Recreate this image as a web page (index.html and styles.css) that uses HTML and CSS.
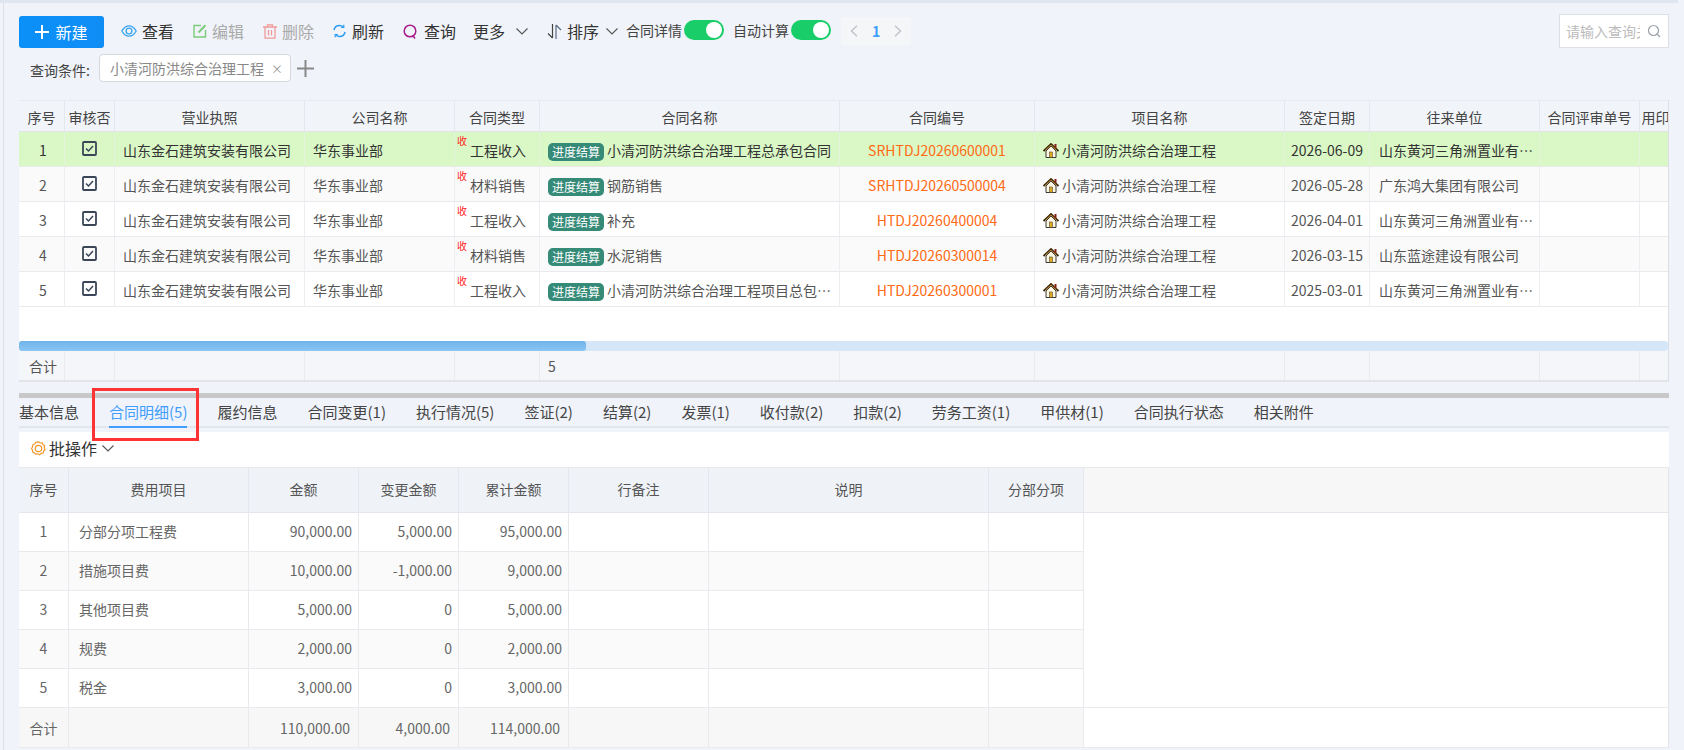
FILE: index.html
```html
<!DOCTYPE html>
<html lang="zh-CN">

<head>
    <meta charset="UTF-8">
    <title>合同管理</title>
    <link rel="stylesheet" href="styles.css">
</head>

<body>
    <div class="top-band"></div>
    <div class="page">

        <div class="toolbar">
            <button class="new-btn">
                <svg width="14" height="14" viewBox="0 0 14 14"><path d="M7 0v14M0 7h14" stroke="#fff" stroke-width="2" fill="none"/></svg>
                新建
            </button>
            <span class="tool first">
                <svg width="16" height="14" viewBox="0 0 16 14" fill="none" stroke="#38a4f4" stroke-width="1.3"><path d="M.8 7C3 3.2 5.3 1.8 8 1.8S13 3.2 15.2 7C13 10.8 10.7 12.2 8 12.2S3 10.8.8 7z"/><circle cx="8" cy="7" r="2.9"/></svg>
                查看
            </span>
            <span class="tool muted">
                <svg width="14" height="14" viewBox="0 0 14 14" fill="none" stroke="#7ccb7c" stroke-width="1.4"><path d="M8 1.5H1V13h11.500V6"/><path d="M5.500 8.500L12.500 1.200" stroke-width="2"/></svg>
                编辑
            </span>
            <span class="tool muted">
                <svg width="14" height="15" viewBox="0 0 14 15" fill="none" stroke="#f09a9a" stroke-width="1.3"><path d="M0 3h14M4.500 3V.8h5V3M2 3v11.200h10V3M5.500 6v5.500M8.500 6v5.500"/></svg>
                删除
            </span>
            <span class="tool refresh">
                <svg width="13" height="14" viewBox="0 0 13 14" fill="none" stroke="#2a9df4" stroke-width="1.5"><path d="M1 6C1.500 3.200 3.700 1.500 6.500 1.500c1.500 0 2.700.5 3.700 1.500"/><path d="M12 8c-.5 2.800-2.700 4.500-5.500 4.500-1.500 0-2.700-.5-3.700-1.500"/><path d="M10.800.8v2.700H8.200M2.200 13.200v-2.700h2.600" stroke-width="1.2"/></svg>
                刷新
            </span>
            <span class="tool query">
                <svg width="14" height="15" viewBox="0 0 14 15" fill="none" stroke="#a81d8c" stroke-width="1.5"><circle cx="7" cy="7" r="5.8"/><path d="M9.800 11.500l2.200 3"/></svg>
                查询
            </span>
            <span class="tool more">
                更多
                <svg class="chev-gap" width="12" height="7" viewBox="0 0 12 7" fill="none" stroke="#555" stroke-width="1.1"><path d="M.5.5L6 6l5.500-5.500"/></svg>
            </span>
            <span class="tool">
                <svg width="15" height="15" viewBox="0 0 15 15" fill="none" stroke-width="1.2"><path d="M5.500 0v14M5.500 14L1 9.500" stroke="#444"/><path d="M9 15V1M9 1l5 5" stroke="#5a6b80"/></svg>
                排序
                <svg class="chev-tight" width="12" height="7" viewBox="0 0 12 7" fill="none" stroke="#555" stroke-width="1.1"><path d="M.5.5L6 6l5.500-5.500"/></svg>
            </span>
            <span class="switch-label first-switch">合同详情</span><span class="switch"></span>
            <span class="switch-label second-switch">自动计算</span><span class="switch"></span>
            <div class="pager">
                <svg width="8" height="12" viewBox="0 0 8 12" fill="none" stroke="#c0c4cc" stroke-width="1.5"><path d="M7 .8L1.500 6 7 11.200"/></svg>
                <span class="pager-num">1</span>
                <svg width="8" height="12" viewBox="0 0 8 12" fill="none" stroke="#c0c4cc" stroke-width="1.5"><path d="M1 .8L6.500 6 1 11.200"/></svg>
            </div>
            <div class="search">
                <input type="text" placeholder="请输入查询关键字">
                <svg width="14" height="14" viewBox="0 0 14 14" fill="none" stroke="#9aa0a8" stroke-width="1.2"><circle cx="6.500" cy="6.500" r="5"/><path d="M10 10l3 3"/></svg>
            </div>
        </div>

        <div class="filter-row">
            <span class="filter-label">查询条件:</span>
            <span class="filter-tag">小清河防洪综合治理工程<span class="tag-close">×</span></span>
            <svg class="filter-add" width="17" height="17" viewBox="0 0 17 17"><path d="M8.500 0v17M0 8.500h17" stroke="#888" stroke-width="2" fill="none"/></svg>
        </div>

        <div class="grid">
            <table class="main-table">
                <colgroup>
                    <col class="c1"><col class="c2"><col class="c3"><col class="c4"><col class="c5"><col class="c6">
                    <col class="c7"><col class="c8"><col class="c9"><col class="c10"><col class="c11"><col class="c12">
                </colgroup>
                <thead>
                    <tr>
                        <th>序号</th><th>审核否</th><th>营业执照</th><th>公司名称</th><th>合同类型</th><th>合同名称</th>
                        <th>合同编号</th><th>项目名称</th><th>签定日期</th><th>往来单位</th><th>合同评审单号</th><th>用印状态</th>
                    </tr>
                </thead>
                <tbody>
                    <tr class="selected">
                        <td class="center">1</td>
                        <td class="center"><svg class="check" width="15" height="15" viewBox="0 0 15 15" fill="none" stroke="#3a4658"><rect x="1" y="1" width="13" height="13" rx="1" stroke-width="1.8"/><path d="M4 7.500l2.500 2.500L11 5" stroke-width="1.5"/></svg></td>
                        <td>山东金石建筑安装有限公司</td>
                        <td>华东事业部</td>
                        <td class="type"><span class="recv">收</span>工程收入</td>
                        <td><span class="badge">进度结算</span>小清河防洪综合治理工程总承包合同</td>
                        <td class="center code">SRHTDJ20260600001</td>
                        <td class="project"><svg class="house" width="16" height="15" viewBox="0 0 16 15"><path d="M3 8v6.500h10V8L8 3z" fill="#fdf6e0" stroke="#222" stroke-width=".9"/><path d="M.5 8L8 1l7.500 7" fill="none" stroke="#3a2708" stroke-width="1.8"/><path d="M2.500 7L8 2l5.500 5" fill="none" stroke="#d0952a" stroke-width=".8"/><rect x="11.500" y="1" width="2" height="4" fill="#8a2318"/><rect x="6.500" y="9" width="3" height="5.500" fill="#e0a81e" stroke="#333" stroke-width=".5"/></svg>小清河防洪综合治理工程</td>
                        <td class="center">2026-06-09</td>
                        <td class="partner">山东黄河三角洲置业有限公司</td>
                        <td></td><td></td>
                    </tr>
                    <tr>
                        <td class="center">2</td>
                        <td class="center"><svg class="check" width="15" height="15" viewBox="0 0 15 15" fill="none" stroke="#3a4658"><rect x="1" y="1" width="13" height="13" rx="1" stroke-width="1.8"/><path d="M4 7.500l2.500 2.500L11 5" stroke-width="1.5"/></svg></td>
                        <td>山东金石建筑安装有限公司</td>
                        <td>华东事业部</td>
                        <td class="type"><span class="recv">收</span>材料销售</td>
                        <td><span class="badge">进度结算</span>钢筋销售</td>
                        <td class="center code">SRHTDJ20260500004</td>
                        <td class="project"><svg class="house" width="16" height="15" viewBox="0 0 16 15"><path d="M3 8v6.500h10V8L8 3z" fill="#fdf6e0" stroke="#222" stroke-width=".9"/><path d="M.5 8L8 1l7.500 7" fill="none" stroke="#3a2708" stroke-width="1.8"/><path d="M2.500 7L8 2l5.500 5" fill="none" stroke="#d0952a" stroke-width=".8"/><rect x="11.500" y="1" width="2" height="4" fill="#8a2318"/><rect x="6.500" y="9" width="3" height="5.500" fill="#e0a81e" stroke="#333" stroke-width=".5"/></svg>小清河防洪综合治理工程</td>
                        <td class="center">2026-05-28</td>
                        <td class="partner">广东鸿大集团有限公司</td>
                        <td></td><td></td>
                    </tr>
                    <tr>
                        <td class="center">3</td>
                        <td class="center"><svg class="check" width="15" height="15" viewBox="0 0 15 15" fill="none" stroke="#3a4658"><rect x="1" y="1" width="13" height="13" rx="1" stroke-width="1.8"/><path d="M4 7.500l2.500 2.500L11 5" stroke-width="1.5"/></svg></td>
                        <td>山东金石建筑安装有限公司</td>
                        <td>华东事业部</td>
                        <td class="type"><span class="recv">收</span>工程收入</td>
                        <td><span class="badge">进度结算</span>补充</td>
                        <td class="center code">HTDJ20260400004</td>
                        <td class="project"><svg class="house" width="16" height="15" viewBox="0 0 16 15"><path d="M3 8v6.500h10V8L8 3z" fill="#fdf6e0" stroke="#222" stroke-width=".9"/><path d="M.5 8L8 1l7.500 7" fill="none" stroke="#3a2708" stroke-width="1.8"/><path d="M2.500 7L8 2l5.500 5" fill="none" stroke="#d0952a" stroke-width=".8"/><rect x="11.500" y="1" width="2" height="4" fill="#8a2318"/><rect x="6.500" y="9" width="3" height="5.500" fill="#e0a81e" stroke="#333" stroke-width=".5"/></svg>小清河防洪综合治理工程</td>
                        <td class="center">2026-04-01</td>
                        <td class="partner">山东黄河三角洲置业有限公司</td>
                        <td></td><td></td>
                    </tr>
                    <tr>
                        <td class="center">4</td>
                        <td class="center"><svg class="check" width="15" height="15" viewBox="0 0 15 15" fill="none" stroke="#3a4658"><rect x="1" y="1" width="13" height="13" rx="1" stroke-width="1.8"/><path d="M4 7.500l2.500 2.500L11 5" stroke-width="1.5"/></svg></td>
                        <td>山东金石建筑安装有限公司</td>
                        <td>华东事业部</td>
                        <td class="type"><span class="recv">收</span>材料销售</td>
                        <td><span class="badge">进度结算</span>水泥销售</td>
                        <td class="center code">HTDJ20260300014</td>
                        <td class="project"><svg class="house" width="16" height="15" viewBox="0 0 16 15"><path d="M3 8v6.500h10V8L8 3z" fill="#fdf6e0" stroke="#222" stroke-width=".9"/><path d="M.5 8L8 1l7.500 7" fill="none" stroke="#3a2708" stroke-width="1.8"/><path d="M2.500 7L8 2l5.500 5" fill="none" stroke="#d0952a" stroke-width=".8"/><rect x="11.500" y="1" width="2" height="4" fill="#8a2318"/><rect x="6.500" y="9" width="3" height="5.500" fill="#e0a81e" stroke="#333" stroke-width=".5"/></svg>小清河防洪综合治理工程</td>
                        <td class="center">2026-03-15</td>
                        <td class="partner">山东蓝途建设有限公司</td>
                        <td></td><td></td>
                    </tr>
                    <tr>
                        <td class="center">5</td>
                        <td class="center"><svg class="check" width="15" height="15" viewBox="0 0 15 15" fill="none" stroke="#3a4658"><rect x="1" y="1" width="13" height="13" rx="1" stroke-width="1.8"/><path d="M4 7.500l2.500 2.500L11 5" stroke-width="1.5"/></svg></td>
                        <td>山东金石建筑安装有限公司</td>
                        <td>华东事业部</td>
                        <td class="type"><span class="recv">收</span>工程收入</td>
                        <td><span class="badge">进度结算</span>小清河防洪综合治理工程项目总包合同</td>
                        <td class="center code">HTDJ20260300001</td>
                        <td class="project"><svg class="house" width="16" height="15" viewBox="0 0 16 15"><path d="M3 8v6.500h10V8L8 3z" fill="#fdf6e0" stroke="#222" stroke-width=".9"/><path d="M.5 8L8 1l7.500 7" fill="none" stroke="#3a2708" stroke-width="1.8"/><path d="M2.500 7L8 2l5.500 5" fill="none" stroke="#d0952a" stroke-width=".8"/><rect x="11.500" y="1" width="2" height="4" fill="#8a2318"/><rect x="6.500" y="9" width="3" height="5.500" fill="#e0a81e" stroke="#333" stroke-width=".5"/></svg>小清河防洪综合治理工程</td>
                        <td class="center">2025-03-01</td>
                        <td class="partner">山东黄河三角洲置业有限公司</td>
                        <td></td><td></td>
                    </tr>
                </tbody>
            </table>
            <div class="grid-empty"></div>
            <div class="scroll-track"><div class="scroll-thumb"></div></div>
            <table class="main-table foot-table">
                <colgroup>
                    <col class="c1"><col class="c2"><col class="c3"><col class="c4"><col class="c5"><col class="c6">
                    <col class="c7"><col class="c8"><col class="c9"><col class="c10"><col class="c11"><col class="c12">
                </colgroup>
                <tr>
                    <td class="center sum-label">合计</td><td></td><td></td><td></td><td></td><td class="sum-count">5</td>
                    <td></td><td></td><td></td><td></td><td></td><td></td>
                </tr>
            </table>
        </div>

        <div class="splitter"></div>

        <div class="tabs">
            <span class="tab">基本信息</span>
            <span class="tab active">合同明细(5)</span>
            <span class="tab">履约信息</span>
            <span class="tab">合同变更(1)</span>
            <span class="tab">执行情况(5)</span>
            <span class="tab">签证(2)</span>
            <span class="tab">结算(2)</span>
            <span class="tab">发票(1)</span>
            <span class="tab">收付款(2)</span>
            <span class="tab">扣款(2)</span>
            <span class="tab">劳务工资(1)</span>
            <span class="tab">甲供材(1)</span>
            <span class="tab">合同执行状态</span>
            <span class="tab">相关附件</span>
            <div class="red-mark"></div>
        </div>

        <div class="detail">
            <div class="batch-bar">
                <svg width="15" height="15" viewBox="0 0 15 15" fill="none" stroke="#f0962a" stroke-width="1.2"><circle cx="7.5" cy="7.5" r="3.2"/><path d="M7.500.8l1.700 1.200 2-.2.800 1.900 1.700 1.100-.5 2 .9 1.800-1.500 1.400-.4 2-2 .3-1.500 1.400-1.800-.9-2 .4L3.700 12l-1.900-.8-.2-2L.5 7.500l1.100-1.700.2-2 1.900-.8L5 1.200z"/></svg>
                <span class="batch-text">批操作</span>
                <svg width="12" height="7" viewBox="0 0 12 7" fill="none" stroke="#555" stroke-width="1.1"><path d="M.5.5L6 6l5.500-5.500"/></svg>
            </div>
            <table class="detail-table">
                <colgroup>
                    <col class="d1"><col class="d2"><col class="d3"><col class="d4"><col class="d5"><col class="d6"><col class="d7"><col class="d8"><col>
                </colgroup>
                <thead>
                    <tr>
                        <th>序号</th><th>费用项目</th><th>金额</th><th>变更金额</th><th>累计金额</th><th>行备注</th><th>说明</th><th>分部分项</th><th class="filler-head"></th>
                    </tr>
                </thead>
                <tbody>
                    <tr><td class="center">1</td><td class="item">分部分项工程费</td><td class="num">90,000.00</td><td class="num">5,000.00</td><td class="num">95,000.00</td><td></td><td></td><td></td><td class="filler" rowspan="5"></td></tr>
                    <tr><td class="center">2</td><td class="item">措施项目费</td><td class="num">10,000.00</td><td class="num">-1,000.00</td><td class="num">9,000.00</td><td></td><td></td><td></td></tr>
                    <tr><td class="center">3</td><td class="item">其他项目费</td><td class="num">5,000.00</td><td class="num">0</td><td class="num">5,000.00</td><td></td><td></td><td></td></tr>
                    <tr><td class="center">4</td><td class="item">规费</td><td class="num">2,000.00</td><td class="num">0</td><td class="num">2,000.00</td><td></td><td></td><td></td></tr>
                    <tr><td class="center">5</td><td class="item">税金</td><td class="num">3,000.00</td><td class="num">0</td><td class="num">3,000.00</td><td></td><td></td><td></td></tr>
                </tbody>
                <tfoot>
                    <tr><td class="center">合计</td><td></td><td class="num">110,000.00</td><td class="num">4,000.00</td><td class="num">114,000.00</td><td></td><td></td><td></td><td class="filler"></td></tr>
                </tfoot>
            </table>
        </div>
    </div>
</body>

</html>
```

FILE: styles.css
```css
* {
    box-sizing: border-box;
}

body {
    margin: 0;
    height: 750px;
    overflow: hidden;
    background-color: #f0f3f9;
    font-family: "Noto Sans CJK SC", "Noto Sans", sans-serif;
    font-size: 14px;
    color: #333;
}

.top-band {
    width: 1678px;
    height: 3px;
    background-color: #e0e6ef;
}

.page {
    width: 1666px;
    height: 747px;
    margin-left: 3px;
    border-left: 1px solid #dcdfe6;
    padding: 13px 0 0 15px;
}

/* top toolbar */
.toolbar {
    display: flex;
    align-items: center;
    height: 32px;
    width: 1650px;
    font-size: 16px;
}

.new-btn {
    display: flex;
    align-items: center;
    justify-content: center;
    gap: 6px;
    width: 85px;
    height: 32px;
    border: none;
    border-radius: 3px;
    background: linear-gradient(90deg, #0a90f8, #0f8df5);
    color: #fff;
    font-family: inherit;
    font-size: 16px;
    padding: 0;
}

.tool {
    display: flex;
    align-items: center;
    gap: 5px;
    margin-left: 19px;
    margin-top: -2px;
    white-space: nowrap;
}

.tool.first {
    margin-left: 17px;
}

.tool.muted {
    color: #aaa;
}

.tool.refresh {
    gap: 6px;
}

.tool.query {
    gap: 7px;
}

.tool.more {
    margin-left: 17px;
}

.chev-gap {
    margin-left: 6px;
}

.chev-tight {
    margin-left: 2px;
}

.switch-label {
    font-size: 14px;
    color: #444;
    margin-top: -5px;
    white-space: nowrap;
}

.first-switch {
    margin-left: 8px;
}

.second-switch {
    margin-left: 9px;
}

.switch {
    position: relative;
    width: 40px;
    height: 20px;
    margin-left: 2px;
    margin-top: -4px;
    border-radius: 10px;
    background-color: #19ce68;
}

.switch::after {
    content: "";
    position: absolute;
    right: 2px;
    top: 2px;
    width: 16px;
    height: 16px;
    border-radius: 50%;
    background-color: #fff;
}

.pager {
    display: flex;
    align-items: center;
    justify-content: space-between;
    width: 70px;
    height: 28px;
    margin-left: 10px;
    margin-top: -2px;
    padding: 0 9px;
    background-color: #f5f6f8;
}

.pager-num {
    color: #409eff;
    font-weight: 700;
    font-size: 14px;
}

.search {
    display: flex;
    align-items: center;
    width: 110px;
    height: 34px;
    margin-left: auto;
    margin-top: -2px;
    padding: 0 7px 0 6px;
    border: 1px solid #dcdfe6;
    background-color: #fff;
}

.search input {
    flex: 1;
    min-width: 0;
    border: none;
    outline: none;
    padding: 0;
    font-family: inherit;
    font-size: 14px;
    margin-right: 7px;
}

.search input::placeholder {
    color: #bbb;
}

/* query condition row */
.filter-row {
    display: flex;
    align-items: center;
    height: 28px;
    margin: 6px 0 18px;
}

.filter-label {
    margin-left: 11px;
    width: 69px;
    color: #444;
    padding-top: 4px;
}

.filter-tag {
    display: flex;
    align-items: center;
    width: 192px;
    height: 28px;
    padding-left: 10px;
    border: 1px solid #d5d8de;
    border-radius: 4px;
    background-color: #fff;
    color: #888;
}

.tag-close {
    margin-left: 7px;
    font-size: 12px;
    color: #999;
}

.filter-add {
    margin-left: 6px;
}

/* main table */
.grid {
    width: 1650px;
    height: 282px;
    overflow: hidden;
    background-color: #fff;
    border-top: 1px solid #e8eaee;
    border-right: 1px solid #dcdfe6;
    border-bottom: 2px solid #e2e4e9;
}

.main-table {
    table-layout: fixed;
    border-collapse: separate;
    border-spacing: 0;
    width: 1681px;
}

.c1 { width: 46px; }
.c2 { width: 50px; }
.c3 { width: 190px; }
.c4 { width: 150px; }
.c5 { width: 85px; }
.c6 { width: 300px; }
.c7 { width: 195px; }
.c8 { width: 250px; }
.c9 { width: 85px; }
.c10 { width: 170px; }
.c11 { width: 100px; }
.c12 { width: 60px; }

.main-table th {
    height: 31px;
    padding: 2px 0 0;
    background-color: #f1f4f9;
    border-right: 1px solid #e4e7ed;
    border-bottom: 1px solid #e0e3e9;
    font-weight: 400;
    color: #444;
    white-space: nowrap;
    overflow: hidden;
}

.main-table td {
    position: relative;
    height: 35px;
    padding: 2px 6px 0 8px;
    border-right: 1px solid #eceef2;
    border-bottom: 1px solid #e8eaee;
    color: #555;
    white-space: nowrap;
    overflow: hidden;
    text-overflow: ellipsis;
}

.main-table tbody tr:nth-child(even) td {
    background-color: #fafafa;
}

.main-table tbody tr.selected td {
    background-color: #daf8c6;
    color: #333;
    border-right-color: #e4f3dc;
}

.main-table td.center {
    padding: 2px 0 0;
    text-align: center;
}

.main-table tbody td:first-child {
    padding-left: 3px;
}

.main-table td.code,
.main-table tbody tr.selected td.code {
    color: #ff6a13;
}

.main-table td.type {
    padding-left: 15px;
}

.recv {
    position: absolute;
    left: 2px;
    top: 4px;
    font-size: 10px;
    line-height: 10px;
    color: #f22;
}

.check {
    display: block;
    margin: -4px auto 0;
}

.badge {
    display: inline-block;
    width: 56px;
    height: 18px;
    margin-right: 3px;
    border-radius: 5px;
    background-color: #358a78;
    color: #fff;
    font-size: 12px;
    line-height: 18px;
    text-align: center;
    vertical-align: -1px;
}

.house {
    margin: 0 3px 2px 0;
    vertical-align: middle;
}

.main-table td.partner {
    padding: 2px 5px 0 9px;
}

.grid-empty {
    height: 34px;
}

.scroll-track {
    height: 10px;
    border-radius: 3px;
    background-color: #d4e6f7;
}

.scroll-thumb {
    width: 567px;
    height: 10px;
    border-radius: 3px;
    background: linear-gradient(180deg, #6fb2ea, #8cc6f3);
}

.foot-table td {
    height: 29px;
    border-bottom: none;
    background-color: #f4f6fa;
    border-right-color: #e9ebef;
}

.main-table td.sum-label {
    padding: 0 0 0 4px;
}

.main-table td.sum-count {
    padding: 0 0 0 8px;
}

/* splitter and tabs */
.splitter {
    width: 1650px;
    height: 5px;
    margin-top: 11px;
    background-color: #c8c8c8;
}

.tabs {
    position: relative;
    display: flex;
    gap: 30px;
    width: 1650px;
    height: 30px;
    border-bottom: 2px solid #e2e6ed;
    font-size: 15px;
    color: #444;
}

.tab {
    height: 30px;
    line-height: 28px;
    white-space: nowrap;
}

.tab.active {
    color: #409eff;
    border-bottom: 2px solid #409eff;
}

/* annotation drawn over the active tab */
.red-mark {
    position: absolute;
    left: 73px;
    top: -10px;
    width: 107px;
    height: 53px;
    border: 3px solid #f33;
}

/* detail panel */
.detail {
    width: 1650px;
    height: 316px;
    margin-top: 4px;
    background-color: #fff;
}

.batch-bar {
    display: flex;
    align-items: center;
    height: 32px;
    margin-bottom: 3px;
    padding-left: 12px;
    font-size: 16px;
}

.batch-text {
    margin: 0 5px 0 3px;
}

.detail-table {
    table-layout: fixed;
    border-collapse: separate;
    border-spacing: 0;
    width: 1650px;
    border-top: 1px solid #e8eaee;
    border-right: 1px solid #e2e4e9;
}

.d1 { width: 50px; }
.d2 { width: 180px; }
.d3 { width: 110px; }
.d4 { width: 100px; }
.d5 { width: 110px; }
.d6 { width: 140px; }
.d7 { width: 280px; }
.d8 { width: 95px; }

.detail-table th {
    height: 45px;
    padding: 0 0 3px;
    background-color: #eff3f8;
    border-right: 1px solid #e4e7ed;
    border-bottom: 1px solid #e4e7ed;
    font-weight: 400;
    color: #555;
}

.detail-table th.filler-head {
    background-color: #f7f7f7;
    border-right: none;
}

.detail-table td {
    height: 39px;
    padding: 0 0 2px;
    border-right: 1px solid #e8eaee;
    border-bottom: 1px solid #e8eaee;
    color: #666;
}

.detail-table tbody tr:nth-child(even) td {
    background-color: #fafafa;
}

.detail-table tfoot td {
    height: 40px;
    padding-bottom: 0;
    background-color: #f7f7f7;
}

.detail-table td.filler,
.detail-table tfoot td.filler {
    background-color: #fff;
    border-right: none;
}

.detail-table td.center {
    text-align: center;
}

.detail-table td.item {
    padding-left: 10px;
}

.detail-table td.num {
    padding-right: 6px;
    text-align: right;
}

.detail-table tfoot td.num {
    padding-right: 8px;
}
```
